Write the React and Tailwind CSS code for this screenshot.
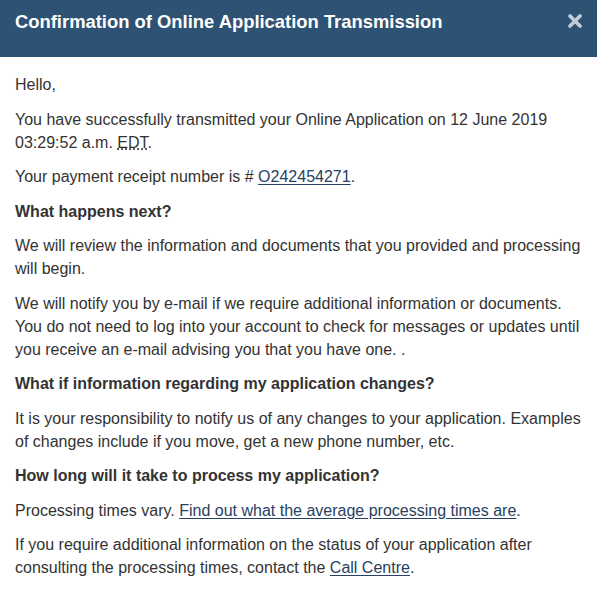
import React from "react";

const P = ({ children }) => <p className="mb-[11.5px]">{children}</p>;
const H = ({ children }) => <p className="mb-[11.5px] font-bold">{children}</p>;
const A = ({ children }) => (
  <a href="#" className="text-[#284162] underline underline-offset-2">
    {children}
  </a>
);

export default function App() {
  return (
    <div className="w-[597px] h-[594px] bg-white font-['Liberation_Sans',Arial,sans-serif] overflow-hidden">
      <div className="h-[57px] bg-[#2e5274] flex items-start justify-between pl-[15px] pr-[15px] pt-[10px]">
        <h2 className="text-white font-bold text-[18.4px] leading-[24px]">
          Confirmation of Online Application Transmission
        </h2>
        {/* close button */}
        <button className="mt-[4px] w-[14px] h-[14px]">
          <svg viewBox="0 0 14 14" className="w-[14px] h-[14px]">
            <path d="M2 2 L12 12 M12 2 L2 12" stroke="#c3ccd6" strokeWidth="3.6" strokeLinecap="round" />
          </svg>
        </button>
      </div>
      <div className="px-[15px] pt-[16px] text-[16px] leading-[23px] text-[#333]">
        <P>Hello,</P>
        <P>
          You have successfully transmitted your Online Application on 12 June 2019 03:29:52 a.m.{" "}
          <abbr className="underline decoration-dotted" title="Eastern Daylight Time">
            EDT
          </abbr>
          .
        </P>
        <P>
          Your payment receipt number is # <A>O242454271</A>.
        </P>
        <H>What happens next?</H>
        <P>We will review the information and documents that you provided and processing will begin.</P>
        <P>
          We will notify you by e-mail if we require additional information or documents. You do not need to
          log into your account to check for messages or updates until you receive an e-mail advising you that
          you have one. .
        </P>
        <H>What if information regarding my application changes?</H>
        <P>
          It is your responsibility to notify us of any changes to your application. Examples of changes
          include if you move, get a new phone number, etc.
        </P>
        <H>How long will it take to process my application?</H>
        <P>
          Processing times vary. <A>Find out what the average processing times are</A>.
        </P>
        <P>
          If you require additional information on the status of your application after consulting the
          processing times, contact the <A>Call Centre</A>.
        </P>
      </div>
    </div>
  );
}
